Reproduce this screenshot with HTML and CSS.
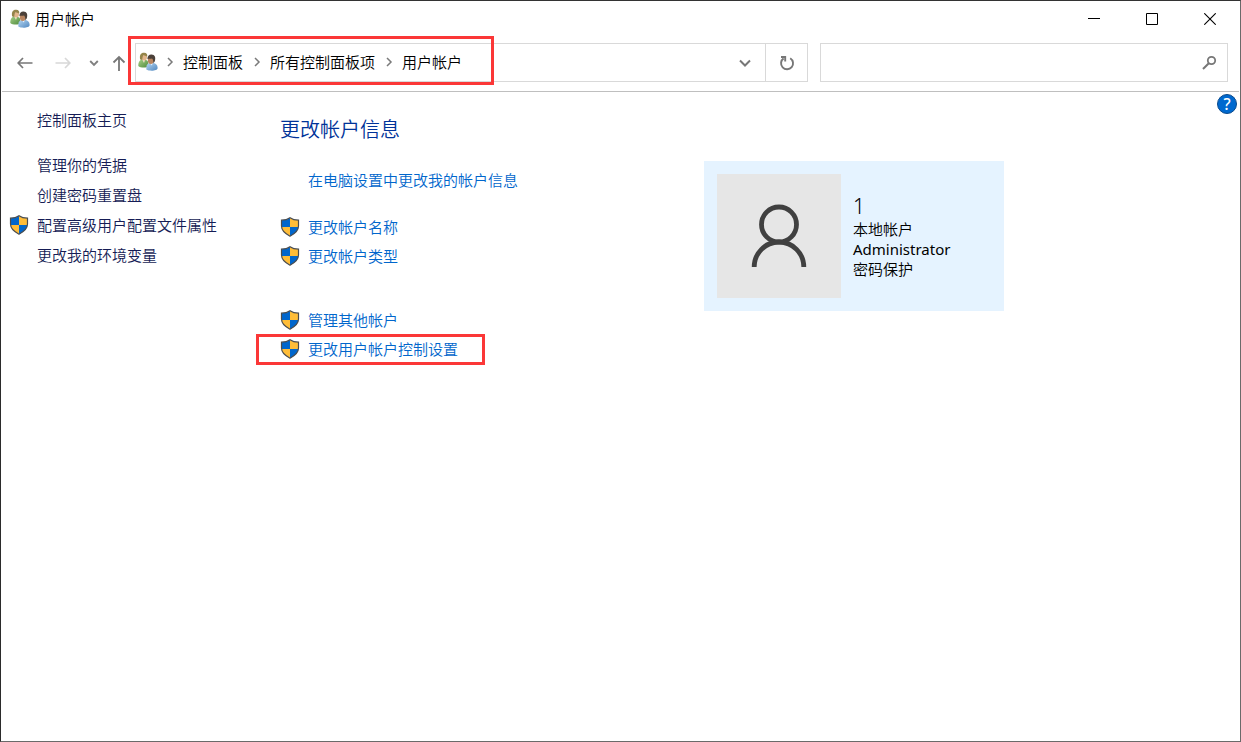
FILE: index.html
```html
<!DOCTYPE html>
<html lang="zh-CN">
<head>
<meta charset="utf-8">
<title>用户帐户</title>
<link rel="stylesheet" href="styles.css">
</head>
<body>
<svg class="defs" aria-hidden="true">
  <defs>
    <linearGradient id="green" x1="0" y1="0" x2="1" y2="1"><stop offset="0" stop-color="#a5cf86"/><stop offset="1" stop-color="#4f8a3c"/></linearGradient>
    <linearGradient id="blue" x1="0" y1="0" x2="1" y2="1"><stop offset="0" stop-color="#b5d6f2"/><stop offset="1" stop-color="#5188c0"/></linearGradient>
    <clipPath id="shield-clip"><path d="M10 .8C7.500 2.600 4.500 3.200 1.500 3.200v5.900c0 4.700 3.700 7.700 8.500 10.100 4.800-2.400 8.500-5.400 8.500-10.100V3.200C15.500 3.200 12.500 2.600 10 .8z"/></clipPath>
  </defs>
  <symbol id="people" viewBox="0 0 20 20">
    <path d="M.3 14C.3 9.500 2 7.600 5.500 7.600s5 1.400 5 4.900v2.300c-2.500 1.200-8.500 1.200-10.200-.8z" fill="url(#green)"/>
    <path d="M4.200 7.500h3L6 11z" fill="#f3e3cf"/>
    <ellipse cx="6.300" cy="5" rx="2.700" ry="3.600" fill="#e2b68c"/>
    <path d="M2.200 7.500C1.200 3 3 .6 6.200.8c2.600.1 3.400 1.800 3 3.600C8 4.200 6.500 3.500 5.500 3 4.500 4 4.500 6 4.200 8z" fill="#94854a"/>
    <path d="M8.300 15.500c0-3.200 2-4.700 5.300-4.700s6 1.500 6 5.200c0 3-8.300 3.500-11.300 1.500z" fill="url(#blue)"/>
    <path d="M11.500 10.500h3.500l-1.200 3z" fill="#eef4fa"/>
    <ellipse cx="12.800" cy="8" rx="3" ry="3.900" fill="#b98560"/>
    <path d="M9.400 7C9.300 4.200 11 2.300 13.500 2.400c3.400.1 4.600 3.100 3.200 7.100l-1.400 1.700c.1-2.400-.3-4-1.300-4.800-1.500.6-3 0-4.600.6z" fill="#4b4039"/>
  </symbol>
  <symbol id="shield" viewBox="0 0 20 20">
    <g clip-path="url(#shield-clip)">
      <path d="M0 0h10v10H0zM10 10h10v10H10z" fill="#0066cc"/>
      <path d="M10 0h10v10H10zM0 10h10v10H0z" fill="#ffbd38"/>
    </g>
    <path d="M10 .8C7.500 2.600 4.500 3.200 1.500 3.200v5.900c0 4.700 3.700 7.700 8.500 10.100 4.800-2.400 8.500-5.400 8.500-10.100V3.200C15.500 3.200 12.500 2.600 10 .8z" fill="none" stroke="#4a4d50" stroke-width="1.200"/>
  </symbol>
  <symbol id="chevron" viewBox="0 0 10 10"><path d="M3 1l4 4-4 4" fill="none" stroke="#7a7a7a" stroke-width="1.500"/></symbol>
</svg>

<div class="window">
  <header class="titlebar">
    <svg class="icon"><use href="#people"/></svg>
    <span class="title">用户帐户</span>
    <button class="caption" aria-label="最小化"><svg viewBox="0 0 12 12"><path d="M0 5.500h12" stroke="#000"/></svg></button>
    <button class="caption" aria-label="最大化"><svg viewBox="0 0 12 12"><path d="M.5.5h11v11H.5z" fill="none" stroke="#000"/></svg></button>
    <button class="caption" aria-label="关闭"><svg viewBox="0 0 12 12"><path d="M.3.3l11.400 11.400M11.700.3L.3 11.700" stroke="#000" stroke-width="1.100"/></svg></button>
  </header>

  <nav class="toolbar">
    <div class="history">
      <button class="nav" aria-label="后退"><svg viewBox="0 0 16 16"><path d="M15.500 8H1M6 3L1.200 8 6 13" fill="none" stroke="#777" stroke-width="1.700"/></svg></button>
      <button class="nav" aria-label="前进" disabled><svg viewBox="0 0 16 16"><path d="M.5 8H15M10 3l4.800 5-4.800 5" fill="none" stroke="#d8d8d8" stroke-width="1.700"/></svg></button>
      <button class="nav nav-narrow" aria-label="最近的位置"><svg viewBox="0 0 16 16"><path d="M3.200 6L7 9.800 10.800 6" fill="none" stroke="#808080" stroke-width="1.900"/></svg></button>
      <button class="nav nav-narrow" aria-label="向上"><svg viewBox="0 0 16 16"><path d="M8 16V2M2.500 7.500L8 2l5.500 5.500" fill="none" stroke="#777" stroke-width="1.800"/></svg></button>
    </div>
    <div class="address">
      <div class="crumbs">
        <svg class="icon"><use href="#people"/></svg>
        <svg class="chevron first"><use href="#chevron"/></svg>
        <a href="#">控制面板</a>
        <svg class="chevron"><use href="#chevron"/></svg>
        <a href="#">所有控制面板项</a>
        <svg class="chevron"><use href="#chevron"/></svg>
        <a href="#">用户帐户</a>
        <span class="mark mark-address"></span>
      </div>
      <button class="drop" aria-label="以前的位置"><svg viewBox="0 0 16 16"><path d="M4 5.500l5 5 5-5" fill="none" stroke="#777" stroke-width="2"/></svg></button>
      <button class="refresh" aria-label="刷新"><svg viewBox="0 0 16 16"><path d="M11.200 3.200a6 6 0 1 1-6.600.2M2 2h4.200v4.600" fill="none" stroke="#777" stroke-width="1.900"/></svg></button>
    </div>
    <label class="search">
      <input type="text" aria-label="搜索控制面板">
      <svg viewBox="0 0 16 16"><circle cx="10.500" cy="5.500" r="3.700" fill="none" stroke="#777" stroke-width="1.800"/><path d="M7.800 8.200L2 14" stroke="#777" stroke-width="2"/></svg>
    </label>
  </nav>

  <div class="body">
    <aside class="sidebar">
      <a class="home" href="#">控制面板主页</a>
      <a href="#">管理你的凭据</a>
      <a href="#">创建密码重置盘</a>
      <a class="guarded" href="#"><svg class="icon"><use href="#shield"/></svg>配置高级用户配置文件属性</a>
      <a href="#">更改我的环境变量</a>
    </aside>
    <main class="content">
      <section class="tasks">
        <h1>更改帐户信息</h1>
        <ul class="group">
          <li><a class="plain" href="#">在电脑设置中更改我的帐户信息</a></li>
        </ul>
        <ul class="group">
          <li><svg class="icon"><use href="#shield"/></svg><a href="#">更改帐户名称</a></li>
          <li><svg class="icon"><use href="#shield"/></svg><a href="#">更改帐户类型</a></li>
        </ul>
        <ul class="group group-last">
          <li><svg class="icon"><use href="#shield"/></svg><a href="#">管理其他帐户</a></li>
          <li><svg class="icon"><use href="#shield"/></svg><a href="#">更改用户帐户控制设置</a><span class="mark mark-task"></span></li>
        </ul>
      </section>
      <section class="card">
        <div class="avatar">
          <svg viewBox="0 0 60 64"><g fill="none" stroke="#404040" stroke-width="4.800"><circle cx="30" cy="20.500" r="17.500"/><path d="M5.200 63A24.800 25 0 0 1 54.800 63"/></g></svg>
        </div>
        <div class="details">
          <strong>1</strong>
          <span>本地帐户</span>
          <span class="latin">Administrator</span>
          <span>密码保护</span>
        </div>
      </section>
    </main>
    <button class="help" aria-label="帮助">?</button>
  </div>
</div>
</body>
</html>
```
FILE: styles.css
```css
* {
  box-sizing: border-box;
}

body {
  margin: 0;
  font: 15px/20px "Noto Sans", "Noto Sans CJK SC", sans-serif;
  font-weight: 350;
  color: #000;
  background: #fff;
}

a {
  text-decoration: none;
  color: inherit;
}

button {
  display: flex;
  align-items: center;
  justify-content: center;
  padding: 0;
  border: 0;
  background: none;
}

.defs {
  position: absolute;
  width: 0;
  height: 0;
}

.icon {
  flex: none;
  width: 20px;
  height: 20px;
}

.window {
  display: flex;
  flex-direction: column;
  min-height: 100vh;
  border: 1px solid #6a6a6a;
  border-top-color: #333;
  border-left-color: #2b2b2b;
}

.titlebar {
  display: flex;
  align-items: center;
  height: 36px;
  padding: 0 1px 0 9px;
}

.title {
  flex: 1;
  margin-left: 5px;
}

.caption {
  width: 58px;
  height: 36px;
}

.caption svg {
  width: 12px;
  height: 12px;
}

.toolbar {
  display: flex;
  margin: 0 1px;
  padding: 6px 11px 9px 5px;
  border-bottom: 1px solid #bfbfbf;
}

.history {
  display: flex;
  flex: none;
  align-items: center;
  width: 128px;
}

.nav {
  width: 36px;
  height: 36px;
}

.nav:disabled {
  width: 40px;
}

.nav svg {
  width: 16px;
  height: 16px;
}

.nav-narrow {
  width: 24px;
}

.address {
  display: flex;
  flex: 671;
  height: 39px;
  border: 1px solid #d9d9d9;
}

.crumbs {
  position: relative;
  display: flex;
  flex: 1;
  align-items: center;
  padding: 0 0 2px 2px;
}

.chevron {
  width: 10px;
  height: 10px;
  margin: 0 8px 0 9px;
}

.first {
  margin-left: 7px;
}

.mark {
  position: absolute;
  border: 3px solid #fb3737;
  pointer-events: none;
}

.mark-address {
  top: -8px;
  left: -8px;
  width: 366px;
  height: 49px;
}

.drop,
.refresh {
  width: 42px;
}

.refresh {
  border-left: 1px solid #d9d9d9;
}

.drop svg,
.refresh svg {
  width: 16px;
  height: 16px;
}

.search {
  display: flex;
  flex: 396;
  align-items: center;
  height: 39px;
  margin-left: 12px;
  padding-right: 10px;
  border: 1px solid #d9d9d9;
}

.search input {
  flex: 1;
  min-width: 0;
  height: 30px;
  padding: 0 8px;
  border: 0;
  outline: 0;
  font: inherit;
}

.search svg {
  width: 16px;
  height: 16px;
}

.body {
  position: relative;
  display: flex;
  flex: 1;
}

.sidebar {
  display: flex;
  flex: none;
  flex-direction: column;
  width: 279px;
  padding: 13px 0 0 36px;
  line-height: 30px;
  color: #151c55;
}

.home {
  margin-bottom: 15px;
}

.guarded {
  display: flex;
  align-items: center;
  gap: 8px;
  margin-left: -28px;
}

.content {
  display: flex;
  flex: 1;
  padding-top: 23px;
}

.tasks {
  width: 424px;
}

h1 {
  margin: 0 0 20px;
  font-size: 20px;
  font-weight: 350;
  line-height: 30px;
  color: #003399;
}

.group {
  margin: 0 0 18px;
  padding: 0;
  list-style: none;
  color: #0066cc;
}

.group li {
  position: relative;
  display: flex;
  align-items: center;
  gap: 8px;
  height: 29px;
}

.group-last {
  margin-top: 35px;
}

.plain {
  margin-left: 28px;
}

.mark-task {
  top: 0;
  left: -24px;
  width: 229px;
  height: 31px;
}

.card {
  display: flex;
  align-items: center;
  align-self: flex-start;
  gap: 12px;
  width: 300px;
  margin-top: 46px;
  padding: 13px;
  background: #e5f3ff;
}

.avatar {
  display: flex;
  align-items: center;
  justify-content: center;
  width: 124px;
  height: 124px;
  background: #e6e6e6;
}

.avatar svg {
  width: 60px;
  height: 64px;
}

.details {
  display: flex;
  flex-direction: column;
}

.details strong {
  font-size: 21px;
  font-weight: 350;
  line-height: 26px;
}

.latin {
  font-weight: 400;
}

.help {
  position: absolute;
  top: 2px;
  right: 3px;
  width: 20px;
  height: 20px;
  border: 1px solid #0a4a8c;
  border-radius: 50%;
  background: #0069cf;
  color: #fff;
  font: 500 16px/18px "Noto Sans", sans-serif;
}
```
